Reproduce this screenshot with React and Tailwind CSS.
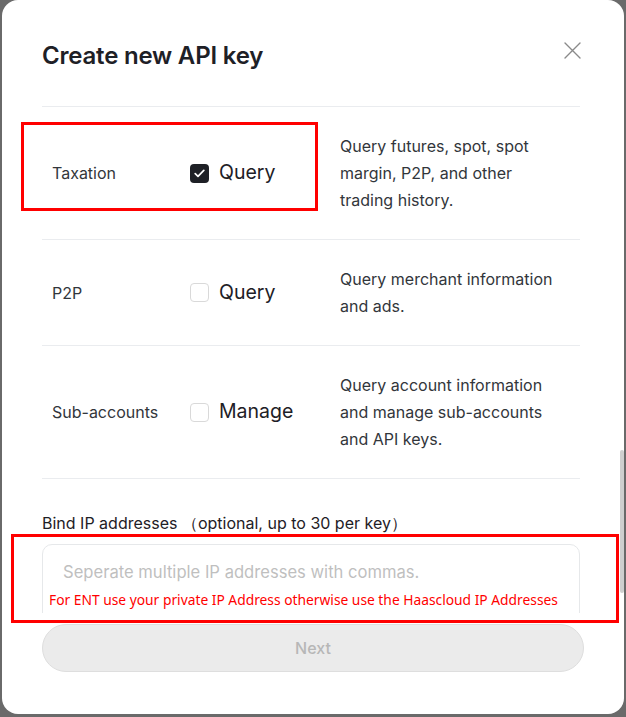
import React from "react";

const rows = [
  {
    label: "Taxation",
    action: "Query",
    checked: true,
    desc: ["Query futures, spot, spot", "margin, P2P, and other", "trading history."],
  },
  {
    label: "P2P",
    action: "Query",
    checked: false,
    desc: ["Query merchant information", "and ads."],
  },
  {
    label: "Sub-accounts",
    action: "Manage",
    checked: false,
    desc: ["Query account information", "and manage sub-accounts", "and API keys."],
  },
];

function Checkbox({ checked }) {
  if (checked) {
    return (
      <div className="w-[19px] h-[19px] rounded-[4px] bg-[#1e2026] flex items-center justify-center">
        <svg width="11" height="9" viewBox="0 0 11 9" fill="none">
          <path d="M1.2 4.6 L4 7.3 L9.8 1.4" stroke="white" strokeWidth="1.7" strokeLinecap="round" strokeLinejoin="round" />
        </svg>
      </div>
    );
  }
  return <div className="w-[19px] h-[19px] rounded-[4px] border border-[#d9d9d9] bg-white" />;
}

export default function App() {
  return (
    <div className="w-[626px] h-[717px] bg-[#6a6a6a] pl-[2px] overflow-hidden" style={{ fontFamily: "Inter, 'Noto Sans', sans-serif" }}>
      <div className="relative w-[622px] h-[714px] bg-white rounded-[16px] flex flex-col">
        {/* header */}
        <div className="flex items-start justify-between pl-[40px] pr-[43px] pt-[40px]">
          <h1 className="text-[24px] leading-[32px] font-semibold text-[#1e2026] tracking-[-0.2px]">Create new API key</h1>
          <button className="mt-[2px] text-[#8a8a8a]">
            <svg width="17" height="17" viewBox="0 0 17 17" fill="none">
              <path d="M1 1 L16 16 M16 1 L1 16" stroke="currentColor" strokeWidth="1.4" strokeLinecap="round" />
            </svg>
          </button>
        </div>

        {/* body */}
        <div className="h-[541px] overflow-hidden px-[40px]">
          <div className="mt-[34px] w-[538px] border-t border-[#eaecef]">
            {rows.map((r) => (
              <div key={r.label} className="flex items-center py-[25.5px] border-b border-[#eaecef]">
                <div className="w-[148px] pl-[10px] text-[16px] text-[#32363b]">{r.label}</div>
                <div className="w-[150px] flex items-center gap-[10px]">
                  <Checkbox checked={r.checked} />
                  <span className="text-[19.5px] text-[#1e2026]">{r.action}</span>
                </div>
                <div className="flex-1 text-[16px] leading-[27px] text-[#32363b]">
                  {r.desc.map((l) => (
                    <div key={l}>{l}</div>
                  ))}
                </div>
              </div>
            ))}
          </div>

          <div className="mt-[32px] text-[16px] leading-[24px] text-[#1e2026]">
            Bind IP addresses （optional, up to 30 per key）
          </div>
          <div className="mt-[9px] w-[538px] h-[100px] border border-[#e6e8ea] rounded-[10px] px-[20px] pt-[15px]">
            <div className="text-[16.6px] leading-[24px] text-[#bfbfbf]">Seperate multiple IP addresses with commas.</div>
            <div className="-ml-[14px] mt-[7px] text-[13.8px] leading-[18px] text-[#ff0000]" style={{ fontFamily: "'Noto Sans', sans-serif" }}>
              For ENT use your private IP Address otherwise use the Haascloud IP Addresses
            </div>
          </div>
        </div>

        {/* footer */}
        <div className="px-[40px] pt-[11px]">
          <button className="w-[542px] h-[48px] rounded-full bg-[#ebebeb] border border-[#dedede] text-[16px] font-medium text-[#b7b7b7]">
            Next
          </button>
        </div>

        {/* scrollbar */}
        <div className="absolute right-[0px] top-[450px] w-[4px] h-[143px] rounded-full bg-[#cfcfcf]" />

        {/* annotation boxes */}
        <div className="absolute left-[19px] top-[122px] w-[297px] h-[89px] border-[3px] border-[#ff0000]" />
        <div className="absolute left-[9px] top-[534px] w-[608px] h-[89px] border-[3px] border-[#ff0000]" />
      </div>
    </div>
  );
}
